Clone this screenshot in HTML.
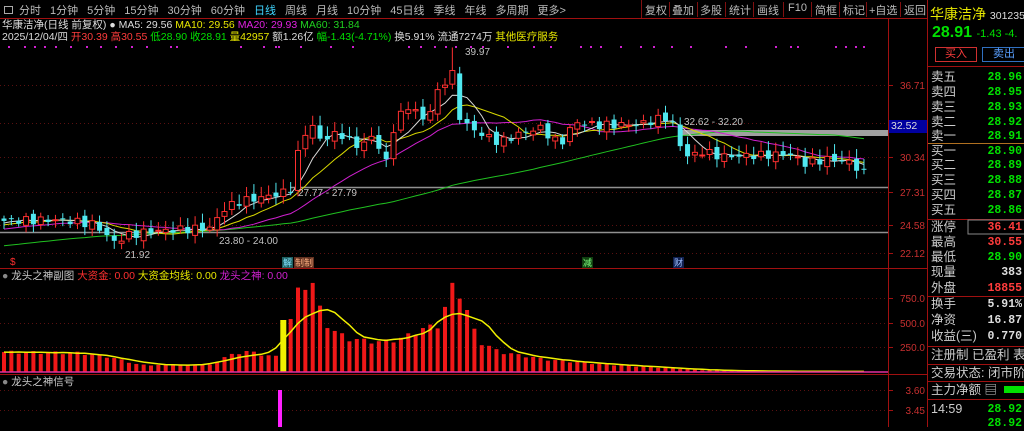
<!DOCTYPE html>
<html><head><meta charset="utf-8"><style>
*{margin:0;padding:0;box-sizing:border-box}
body{width:1024px;height:427px;background:#000;overflow:hidden;position:relative;font-family:"Liberation Sans","Noto Sans CJK SC",sans-serif;font-size:10px;color:#c8c8c8}
.a{position:absolute;white-space:nowrap}
#tb span{margin-right:9px}
.bt{position:absolute;top:2px;font-size:11px;color:#bbb}
.rp div.r{position:absolute;left:931px;width:93px;height:15px;font-size:12.5px;line-height:15px;white-space:nowrap;overflow:hidden}
.rp .v{position:absolute;right:2px;top:0;font-family:"Liberation Mono",monospace;font-size:11.5px;font-weight:bold}
.g{color:#00e000}.rd{color:#ff3c3c}.w{color:#ddd}
</style></head><body>
<svg id="s" width="1024" height="427" style="position:absolute;left:0;top:0"></svg>
<div class="a" id="tb" style="left:4px;top:2px;font-size:11px;color:#bbb"><span style="border:1px solid #aaa;display:inline-block;width:9px;height:8px;margin-right:6px"></span><span>分时</span><span>1分钟</span><span>5分钟</span><span>15分钟</span><span>30分钟</span><span>60分钟</span><span style="color:#3fd5ff">日线</span><span>周线</span><span>月线</span><span>10分钟</span><span>45日线</span><span>季线</span><span>年线</span><span>多周期</span><span>更多&gt;</span></div>
<span class="bt" style="left:645px">复权</span><span class="bt" style="left:672px">叠加</span><span class="bt" style="left:700px">多股</span><span class="bt" style="left:729px">统计</span><span class="bt" style="left:757px">画线</span><span class="bt" style="left:788px">F10</span><span class="bt" style="left:815px">简框</span><span class="bt" style="left:843px">标记</span><span class="bt" style="left:869px">+自选</span><span class="bt" style="left:904px">返回</span>
<div class="a" style="left:2px;top:17px;font-size:10.5px"><span class="w">华康洁净(日线 前复权) ● MA5: 29.56 </span><span style="color:#e8e800">MA10: 29.56 </span><span style="color:#e020e0">MA20: 29.93 </span><span style="color:#20d020">MA60: 31.84</span></div>
<div class="a" style="left:2px;top:29px;font-size:10.5px"><span class="w">2025/12/04/四 </span><span class="rd">开30.39 高30.55 </span><span class="g">低28.90 收28.91 </span><span style="color:#e8e800">量42957 </span><span class="w">额1.26亿 </span><span class="g">幅-1.43(-4.71%) </span><span class="w">换5.91% 流通7274万 </span><span style="color:#e8e800">其他医疗服务</span></div>
<div class="a" style="left:930px;top:4px;font-size:14px;color:#e8e800">华康洁净 <span style="color:#ddd;font-size:10.5px">301235</span></div>
<div class="a" style="left:932px;top:24px;font-size:16px;font-weight:bold;color:#00e000">28.91 <span style="font-size:11px;font-weight:normal">-1.43 -4.</span></div>
<div class="a" style="left:935px;top:47px;width:42px;height:15px;border:1px solid #d03030;color:#ff3c3c;text-align:center;font-size:11px;line-height:13px">买入</div>
<div class="a" style="left:982px;top:47px;width:44px;height:15px;border:1px solid #3070c0;color:#5aa0ff;text-align:center;font-size:11px;line-height:13px">卖出</div>
<div class="rp" id="rp"></div>
<div class="a" style="left:889px;top:120px;width:38px;height:13px;background:#0000a0;color:#ddd;font-size:10.5px;line-height:13px;padding-left:2px">32.52</div>
<script>
var S=document.getElementById('s'),h='';
function L(x1,y1,x2,y2,c,w,d){h+='<line x1="'+x1+'" y1="'+y1+'" x2="'+x2+'" y2="'+y2+'" stroke="'+c+'" stroke-width="'+(w||1)+'"'+(d?' stroke-dasharray="'+d+'"':'')+'/>';}
function R(x,y,w,hh,f,st){h+='<rect x="'+x+'" y="'+y+'" width="'+w+'" height="'+hh+'" fill="'+f+'"'+(st?' stroke="'+st+'"':'')+'/>';}
function T(x,y,t,c,fs,a){h+='<text x="'+x+'" y="'+y+'" fill="'+c+'" font-size="'+(fs||10)+'" font-family="Liberation Sans,Noto Sans CJK SC,sans-serif"'+(a?' text-anchor="'+a+'"':'')+'>'+t+'</text>';}
L(0,18.5,927,18.5,'#a01010');L(927.5,0,927.5,427,'#a01010');L(888.5,18,888.5,427,'#a01010');
L(0,268.5,927,268.5,'#a01010');L(0,374.5,927,374.5,'#a01010');
L(641.5,0,641.5,18,'#801010');
[669,697,725,753,783,811,839,866,900].forEach(function(x){L(x+.5,2,x+.5,17,'#801010')});
[[85,'36.71'],[123,''],[157,'30.34'],[192,'27.31'],[225,'24.58'],[253,'22.12']].forEach(function(g){L(0,g[0]+.5,888,g[0]+.5,'#5a1010',1,'1 3');L(888,g[0]+.5,893,g[0]+.5,'#a01010');if(g[1])T(925,g[0]+4,g[1],'#c83030',10,'end');});
[[298,'750.0'],[323,'500.0'],[347,'250.0']].forEach(function(g){L(0,g[0]+.5,888,g[0]+.5,'#5a1010',1,'1 3');L(888,g[0]+.5,893,g[0]+.5,'#a01010');T(925,g[0]+4,g[1],'#c83030',10,'end');});
[[390,'3.60'],[410,'3.45']].forEach(function(g){L(0,g[0]+.5,888,g[0]+.5,'#5a1010',1,'1 3');L(888,g[0]+.5,893,g[0]+.5,'#a01010');T(925,g[0]+4,g[1],'#c83030',10,'end');});
function interp(pts,x){for(var k=0;k<pts.length-1;k++){if(x<=pts[k+1][0]){var a=pts[k],b=pts[k+1];return a[1]+(b[1]-a[1])*(x-a[0])/(b[0]-a[0]);}}return pts[pts.length-1][1];}
var cp=[[0,24.9],[60,25.0],[95,24.6],[115,23.0],[125,23.6],[150,24.0],[210,24.3],[225,26.0],[240,26.6],[260,26.9],[290,27.5],[300,31.5],[310,33.5],[320,32.0],[340,32.5],[360,31.3],[375,32.5],[385,29.5],[395,33.5],[410,35.0],[425,33.5],[440,36.5],[452,37.8],[460,33.8],[470,33.0],[480,32.5],[500,31.7],[520,32.5],[540,33.0],[560,31.5],[575,33.5],[600,33.2],[640,33.3],[670,34.0],[680,31.5],[690,30.3],[700,31.0],[720,30.5],[760,30.6],[790,30.7],[805,29.9],[830,30.3],[850,30.0],[866,28.91]];
var N=118,W=60,cl=[];
for(var i=0;i<W;i++)cl.push(20.5+4.4*i/W+Math.sin(i*1.3)*0.3);
function cx(i){return 4+i*7.35;}
for(var i=0;i<N;i++){cl.push(interp(cp,cx(i))+Math.sin(i*2.7)*0.35);}
function py(p){return 85+(36.71-p)*11.515;}
function ma(n,col){var d='';for(var i=0;i<N;i++){var s=0;for(var k=0;k<n;k++)s+=cl[W+i-k];d+=(i?'L':'M')+cx(i).toFixed(1)+' '+py(s/n).toFixed(1);}h+='<path d="'+d+'" fill="none" stroke="'+col+'" stroke-width="1"/>';}
L(290,187.5,888,187.5,'#909090',1.5);L(0,232.5,888,232.5,'#909090',1.5);
R(681,130,207,6,'#a0a0a0');
ma(60,'#20c020');ma(20,'#d020d0');ma(10,'#d8d800');ma(5,'#d8d8d8');
for(var i=0;i<N;i++){var c=cl[W+i],o=cl[W+i-1]+Math.sin(i*1.9)*0.25;var up=c>o;var hi=Math.max(c,o)+0.25+Math.abs(Math.sin(i*3.1))*0.6,lo=Math.min(c,o)-0.2-Math.abs(Math.cos(i*2.3))*0.5;
if(i==61){hi=39.97;}var x=cx(i),col=up?'#ff3030':'#50e8f0';
L(x,py(hi),x,py(lo),col);var y1=py(Math.max(c,o)),y2=py(Math.min(c,o));if(y2-y1<1)y2=y1+1;
if(up)R(x-2.5,y1,5,y2-y1,'#000',col);else R(x-2.5,y1,5,y2-y1,col);}
T(465,55,'39.97','#c0c0c0',10);T(298,196,'27.77 - 27.79','#c0c0c0',10);T(219,244,'23.80 - 24.00','#c0c0c0',10);T(125,258,'21.92','#c0c0c0',10);T(684,125,'32.62 - 32.20','#c0c0c0',10);
[8,24,34,44,55,70,86,100,115,131,146,170,176,240,263,275,278,300,330,352,352,408,420,434,445,455,470,482,507,533,550,580,590,600,620,640,653,671,690,725,745,775,790,797,835,845,855,863].forEach(function(x){R(x,46,2,2,'#d020d0')});
T(10,265,'$','#ff3030',10);R(282,257,11,11,'#206060');T(283,266,'解','#80e0ff',9);R(294,257,20,11,'#603020');T(295,266,'制','#ffb080',9);T(304,266,'制','#ffb080',9);
R(582,257,11,11,'#104010');T(583,266,'减','#80ff80',9);R(673,257,11,11,'#102050');T(674,266,'财','#a0c0ff',9);
T(2,279,'<tspan fill="#888">●</tspan> 龙头之神副图 <tspan fill="#ff3030">大资金: 0.00 </tspan><tspan fill="#e8e800">大资金均线: 0.00 </tspan><tspan fill="#d020d0">龙头之神: 0.00</tspan>','#c8c8c8',10.5);
var sp=[[0,200],[80,190],[110,150],[140,70],[210,70],[225,150],[245,210],[265,170],[278,150],[285,400],[292,550],[300,880],[312,900],[318,680],[325,500],[335,400],[350,330],[380,300],[400,330],[420,420],[440,480],[452,850],[462,780],[470,500],[480,300],[500,200],[550,120],[600,80],[650,50],[700,20],[750,10],[866,5]];
var sv=[];for(var i=0;i<N;i++){sv.push(Math.max(3,interp(sp,cx(i))*(1+Math.sin(i*2.1)*0.08)));}
function sy(v){return 372-v*0.1;}
for(var i=0;i<N;i++){var x=cx(i);if(Math.abs(x-280)<4){R(x-3,320,6,52,'#f0f000');continue;}R(x-2,sy(sv[i]),4,372-sy(sv[i]),'#f01818');}
var d='';for(var i=0;i<N;i++){var s=0,n=0;for(var k=-5;k<=2;k++){var j=i+k;if(j>=0&&j<N){s+=sv[j];n++;}}d+=(i?'L':'M')+cx(i).toFixed(1)+' '+sy(s/n).toFixed(1);}
h+='<path d="'+d+'" fill="none" stroke="#f0f000" stroke-width="1.5"/>';
L(0,372,888,372,'#e030a0',1.5);
T(2,385,'<tspan fill="#888">●</tspan> 龙头之神信号','#c8c8c8',10.5);
R(278,390,4,37,'#ff20ff');
[[143,'#b07020'],[219,'#a01010'],[296,'#a01010'],[346,'#a01010'],[364,'#a01010'],[381,'#a01010'],[399,'#a01010'],[66,'#a01010']].forEach(function(l){L(928,l[0]+.5,1024,l[0]+.5,l[1])});
R(968,220,58,14,'none','#888');R(1004,386,20,7,'#00e000');
S.innerHTML=h;
var rows=[['卖五','28.96','g',70],['卖四','28.95','g',85],['卖三','28.93','g',100],['卖二','28.92','g',115],['卖一','28.91','g',129],['买一','28.90','g',144],['买二','28.89','g',158],['买三','28.88','g',173],['买四','28.87','g',188],['买五','28.86','g',203],['涨停','36.41','rd',220],['最高','30.55','rd',235],['最低','28.90','g',250],['现量','383','w',265],['外盘','18855','rd',281],['换手','5.91%','w',297],['净资','16.87','w',313],['收益(三)','0.770','w',329],['注册制 已盈利 表','','w',348],['交易状态: 闭市阶','','w',366],['主力净额 ▤','','w',383],['14:59','28.92','g',402],['','28.92','g',416]];
var r='';rows.forEach(function(a){r+='<div class="r" style="top:'+a[3]+'px;color:#ccc">'+a[0]+'<span class="v '+a[2]+'">'+a[1]+'</span></div>'});
document.getElementById('rp').innerHTML=r;
</script>
</body></html>
